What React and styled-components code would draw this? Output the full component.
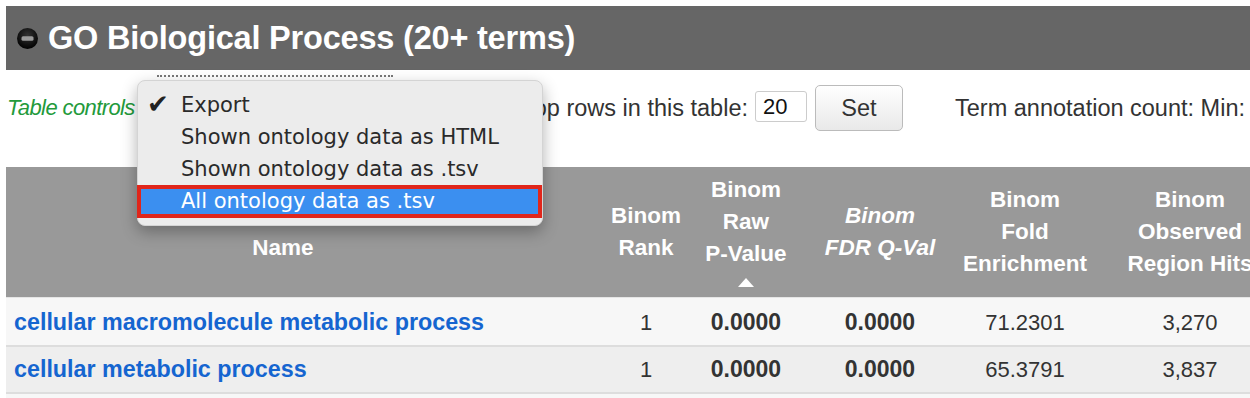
import React from "react";
import styled, { createGlobalStyle } from "styled-components";

const GlobalStyle = createGlobalStyle`
  body {
    margin: 0;
    background: #fff;
    overflow: hidden;
    font-family: "Liberation Sans", Arial, sans-serif;
  }
`;

const Page = styled.div`
  position: relative;
  width: 1290px;
  padding: 6px 0 0 6px;
`;

const Header = styled.div`
  height: 64px;
  background: #666;
  display: flex;
  align-items: center;
  padding-left: 11px;
  gap: 10px;
`;

const Title = styled.h2`
  margin: 0;
  color: #fff;
  font-size: 32.5px;
  font-weight: bold;
  letter-spacing: -0.2px;
`;

const Controls = styled.div`
  height: 97px;
  box-sizing: border-box;
  padding-top: 15px;
  display: flex;
  align-items: flex-start;
  font-size: 23.5px;
  color: #333;
`;

const Lead = styled.div`
  width: 742px;
  display: flex;
  justify-content: space-between;
`;

const Label = styled.span`
  line-height: 46px;
  white-space: nowrap;
  margin-left: ${(p) => p.$ml || 0}px;
`;

const GreenLabel = styled(Label)`
  color: #239a3b;
  font-style: italic;
  font-size: 22px;
  letter-spacing: -0.6px;
  margin-left: 1px;
`;

const CountInput = styled.span`
  box-sizing: border-box;
  margin: 6px 0 0 7px;
  width: 52px;
  height: 31px;
  border: 1px solid #ccc;
  border-radius: 3px;
  padding-left: 7px;
  line-height: 29px;
  font-size: 22px;
  color: #111;
  background: #fff;
`;

const SetButton = styled.span`
  box-sizing: border-box;
  margin-left: 8px;
  width: 88px;
  height: 46px;
  border: 1px solid #bbb;
  border-radius: 5px;
  background: linear-gradient(#fff, #e9e9e9);
  text-align: center;
  line-height: 44px;
  color: #333;
`;

const Table = styled.table`
  border-collapse: collapse;
  table-layout: fixed;
  width: 1284px;
  font-size: 22px;
  color: #333;
`;

const Th = styled.th`
  height: 130px;
  padding: 0 ${(p) => p.$pr || 0}px 0 0;
  background: #999;
  color: #fff;
  font-size: 22.5px;
  font-weight: bold;
  line-height: 32px;
  text-align: center;
  vertical-align: middle;
  font-style: ${(p) => (p.$italic ? "italic" : "normal")};
  white-space: nowrap;
`;

const SortArrow = styled.div`
  width: 0;
  height: 0;
  margin: 8px auto 4px;
  border-left: 8px solid transparent;
  border-right: 8px solid transparent;
  border-bottom: 9px solid #fff;
`;

const Row = styled.tr`
  background: ${(p) => (p.$alt ? "#eee" : "#f7f7f7")};
  border-bottom: 2px solid #ddd;
  &:first-child td {
    border-top: 1px solid #e5e5e5;
    padding-top: 2px;
  }
`;

const Td = styled.td`
  height: 45px;
  padding: 0;
  text-align: center;
  font-size: ${(p) => (p.$bold ? 23 : 22)}px;
  font-weight: ${(p) => (p.$bold ? "bold" : "normal")};
`;

const NameTd = styled(Td)`
  text-align: left;
  padding-left: 8px;
`;

const TermLink = styled.a`
  color: #1565d0;
  font-size: 23.3px;
  font-weight: bold;
  text-decoration: none;
`;

const Filler = styled.tr`
  background: #f7f7f7;
  td {
    height: 20px;
  }
`;

const DottedRule = styled.div`
  position: absolute;
  left: 157px;
  top: 75px;
  width: 236px;
  border-top: 2px dotted #777;
`;

const Menu = styled.div`
  position: absolute;
  left: 137px;
  top: 80px;
  width: 406px;
  box-sizing: border-box;
  padding: 8px 0 7px;
  background: #ececec;
  border: 1px solid #d4d4d4;
  border-radius: 8px;
  box-shadow: 0 6px 16px rgba(0, 0, 0, 0.3);
  font-family: "DejaVu Sans", "Liberation Sans", sans-serif;
  font-size: 21px;
  color: #2a2a2a;
`;

const MenuItem = styled.div`
  position: relative;
  height: 32px;
  line-height: 32px;
  padding-left: 43px;
  white-space: nowrap;
  ${(p) =>
    p.$selected &&
    `
    margin: 0 0 0 -1px;
    height: 33px;
    line-height: 25px;
    box-sizing: border-box;
    border: 4px solid #e0261b;
    padding-left: 40px;
    background: #3b8ff0;
    color: #fff;
  `}
`;

const Check = styled.span`
  position: absolute;
  left: 9px;
  top: -1px;
  font-size: 26px;
  color: #222;
`;

const MinusIcon = () => (
  <svg width="21" height="21" viewBox="0 0 21 21">
    <defs>
      <radialGradient id="g" cx="50%" cy="35%" r="65%">
        <stop offset="0%" stopColor="#333" />
        <stop offset="100%" stopColor="#000" />
      </radialGradient>
    </defs>
    <circle cx="10.5" cy="10.5" r="10.5" fill="url(#g)" />
    <rect x="4.5" y="8.3" width="12" height="4.4" rx="1.5" fill="#999" />
  </svg>
);

const columns = [
  { lines: ["\u00a0", "Name"], pr: 40 },
  { lines: ["Binom", "Rank"] },
  { lines: ["Binom", "Raw", "P-Value"], sorted: true },
  { lines: ["Binom", "FDR Q-Val"], italic: true },
  { lines: ["Binom", "Fold", "Enrichment"] },
  { lines: ["Binom", "Observed", "Region Hits"] },
];

const rows = [
  ["cellular macromolecule metabolic process", "1", "0.0000", "0.0000", "71.2301", "3,270"],
  ["cellular metabolic process", "1", "0.0000", "0.0000", "65.3791", "3,837"],
];

const widths = [594, 92, 108, 160, 130, 200];

export default function App() {
  return (
    <>
      <GlobalStyle />
      <Page>
        <Header>
          <MinusIcon />
          <Title>GO Biological Process (20+ terms)</Title>
        </Header>
        <Controls>
          <Lead>
            <GreenLabel>Table controls</GreenLabel>
            <Label>Show top rows in this table:</Label>
          </Lead>
          <CountInput>20</CountInput>
          <SetButton>Set</SetButton>
          <Label $ml={52}>Term annotation count: Min:</Label>
        </Controls>
        <Table>
          <colgroup>
            {widths.map((w, i) => (
              <col key={i} style={{ width: w }} />
            ))}
          </colgroup>
          <thead>
            <tr>
              {columns.map((c, i) => (
                <Th key={i} $pr={c.pr} $italic={c.italic}>
                  {c.lines.map((l) => (
                    <div key={l}>{l}</div>
                  ))}
                  {c.sorted && <SortArrow />}
                </Th>
              ))}
            </tr>
          </thead>
          <tbody>
            {rows.map((r, i) => (
              <Row key={i} $alt={i % 2 === 1}>
                <NameTd>
                  <TermLink href="#">{r[0]}</TermLink>
                </NameTd>
                <Td>{r[1]}</Td>
                <Td $bold>{r[2]}</Td>
                <Td $bold>{r[3]}</Td>
                <Td>{r[4]}</Td>
                <Td>{r[5]}</Td>
              </Row>
            ))}
            <Filler>
              <td colSpan={6} />
            </Filler>
          </tbody>
        </Table>
        <DottedRule />
        <Menu>
          <MenuItem>
            <Check>✔</Check>Export
          </MenuItem>
          <MenuItem>Shown ontology data as HTML</MenuItem>
          <MenuItem>Shown ontology data as .tsv</MenuItem>
          <MenuItem $selected>All ontology data as .tsv</MenuItem>
        </Menu>
      </Page>
    </>
  );
}
